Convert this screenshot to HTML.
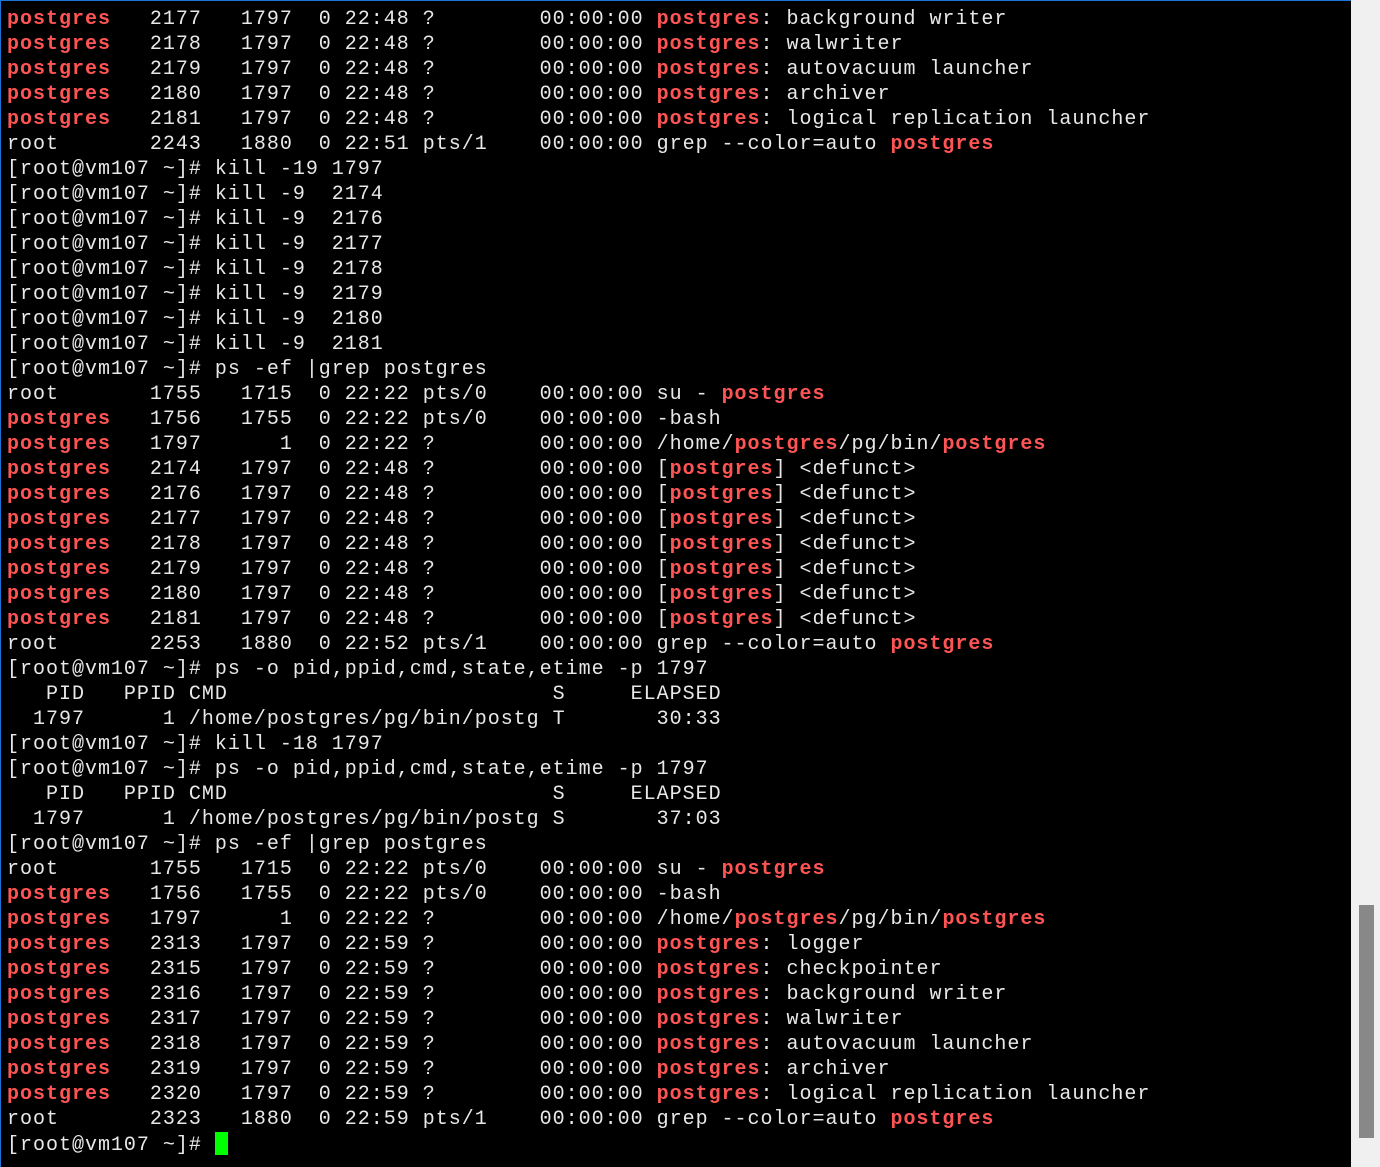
<!DOCTYPE html>
<html><head><meta charset="utf-8"><style>
html,body{margin:0;padding:0;width:1380px;height:1167px;overflow:hidden;background:#000}
#t{position:absolute;left:0;top:0;width:1351px;height:1167px;background:#000;border-left:1px solid #1e73d6;border-top:1px solid #1e73d6;box-sizing:border-box}
pre{position:absolute;left:6px;top:6px;margin:0;font-family:"Liberation Mono",monospace;font-size:20px;letter-spacing:0.99px;line-height:25px;color:#e8e8e8}
b{color:#ff5454;font-weight:bold}
#sb{position:absolute;left:1351px;top:0;width:29px;height:1167px;background:#f0f0f0}
#th{position:absolute;left:1359px;top:905px;width:15px;height:233px;background:#888}
#cur{display:inline-block;width:13px;height:23px;background:#00ff00;vertical-align:-5px}
</style></head><body>
<div id="t"><pre><b>postgres</b>   2177   1797  0 22:48 ?        00:00:00 <b>postgres</b>: background writer
<b>postgres</b>   2178   1797  0 22:48 ?        00:00:00 <b>postgres</b>: walwriter
<b>postgres</b>   2179   1797  0 22:48 ?        00:00:00 <b>postgres</b>: autovacuum launcher
<b>postgres</b>   2180   1797  0 22:48 ?        00:00:00 <b>postgres</b>: archiver
<b>postgres</b>   2181   1797  0 22:48 ?        00:00:00 <b>postgres</b>: logical replication launcher
root       2243   1880  0 22:51 pts/1    00:00:00 grep --color=auto <b>postgres</b>
[root@vm107 ~]# kill -19 1797
[root@vm107 ~]# kill -9  2174
[root@vm107 ~]# kill -9  2176
[root@vm107 ~]# kill -9  2177
[root@vm107 ~]# kill -9  2178
[root@vm107 ~]# kill -9  2179
[root@vm107 ~]# kill -9  2180
[root@vm107 ~]# kill -9  2181
[root@vm107 ~]# ps -ef |grep postgres
root       1755   1715  0 22:22 pts/0    00:00:00 su - <b>postgres</b>
<b>postgres</b>   1756   1755  0 22:22 pts/0    00:00:00 -bash
<b>postgres</b>   1797      1  0 22:22 ?        00:00:00 /home/<b>postgres</b>/pg/bin/<b>postgres</b>
<b>postgres</b>   2174   1797  0 22:48 ?        00:00:00 [<b>postgres</b>] &lt;defunct&gt;
<b>postgres</b>   2176   1797  0 22:48 ?        00:00:00 [<b>postgres</b>] &lt;defunct&gt;
<b>postgres</b>   2177   1797  0 22:48 ?        00:00:00 [<b>postgres</b>] &lt;defunct&gt;
<b>postgres</b>   2178   1797  0 22:48 ?        00:00:00 [<b>postgres</b>] &lt;defunct&gt;
<b>postgres</b>   2179   1797  0 22:48 ?        00:00:00 [<b>postgres</b>] &lt;defunct&gt;
<b>postgres</b>   2180   1797  0 22:48 ?        00:00:00 [<b>postgres</b>] &lt;defunct&gt;
<b>postgres</b>   2181   1797  0 22:48 ?        00:00:00 [<b>postgres</b>] &lt;defunct&gt;
root       2253   1880  0 22:52 pts/1    00:00:00 grep --color=auto <b>postgres</b>
[root@vm107 ~]# ps -o pid,ppid,cmd,state,etime -p 1797
   PID   PPID CMD                         S     ELAPSED
  1797      1 /home/postgres/pg/bin/postg T       30:33
[root@vm107 ~]# kill -18 1797
[root@vm107 ~]# ps -o pid,ppid,cmd,state,etime -p 1797
   PID   PPID CMD                         S     ELAPSED
  1797      1 /home/postgres/pg/bin/postg S       37:03
[root@vm107 ~]# ps -ef |grep postgres
root       1755   1715  0 22:22 pts/0    00:00:00 su - <b>postgres</b>
<b>postgres</b>   1756   1755  0 22:22 pts/0    00:00:00 -bash
<b>postgres</b>   1797      1  0 22:22 ?        00:00:00 /home/<b>postgres</b>/pg/bin/<b>postgres</b>
<b>postgres</b>   2313   1797  0 22:59 ?        00:00:00 <b>postgres</b>: logger
<b>postgres</b>   2315   1797  0 22:59 ?        00:00:00 <b>postgres</b>: checkpointer
<b>postgres</b>   2316   1797  0 22:59 ?        00:00:00 <b>postgres</b>: background writer
<b>postgres</b>   2317   1797  0 22:59 ?        00:00:00 <b>postgres</b>: walwriter
<b>postgres</b>   2318   1797  0 22:59 ?        00:00:00 <b>postgres</b>: autovacuum launcher
<b>postgres</b>   2319   1797  0 22:59 ?        00:00:00 <b>postgres</b>: archiver
<b>postgres</b>   2320   1797  0 22:59 ?        00:00:00 <b>postgres</b>: logical replication launcher
root       2323   1880  0 22:59 pts/1    00:00:00 grep --color=auto <b>postgres</b>
[root@vm107 ~]# <span id="cur"></span></pre></div>
<div id="sb"></div><div id="th"></div>
</body></html>
